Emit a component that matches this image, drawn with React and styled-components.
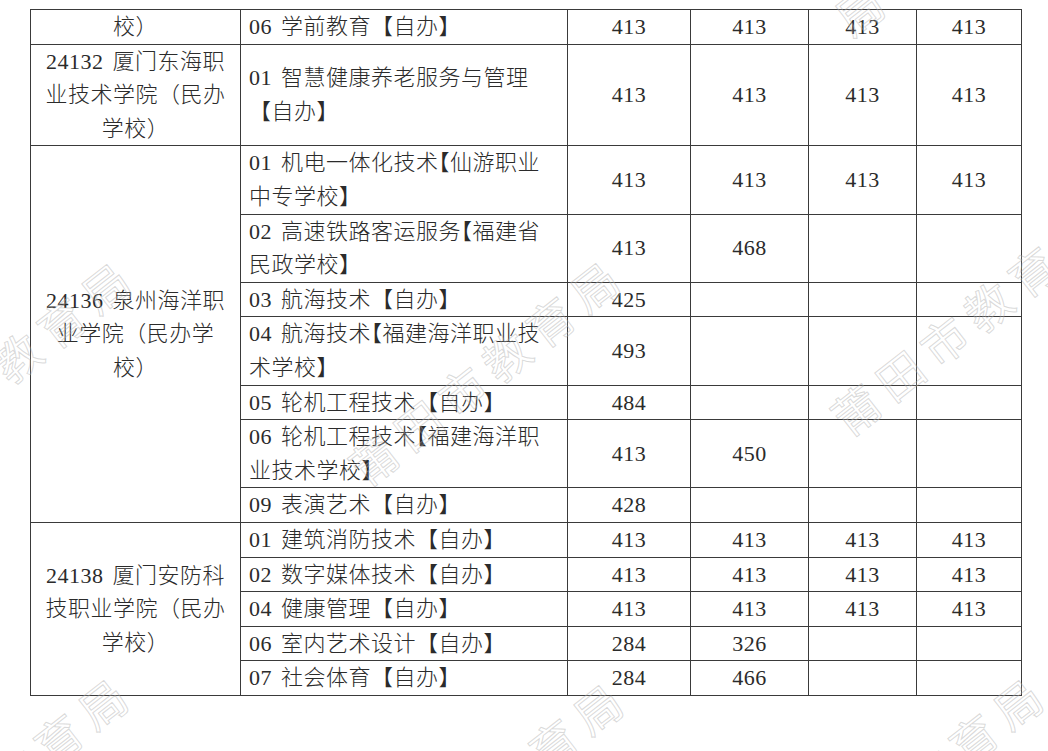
import React from 'react';
import styled, { createGlobalStyle } from 'styled-components';

const GlobalStyle = createGlobalStyle`
  html, body {
    margin: 0;
    padding: 0;
    background: #ffffff;
  }
`

const Page = styled.div`
  position: relative;
  width: 1048px;
  height: 751px;
  overflow: hidden;
  box-sizing: border-box;
  padding: 9px 0 0 30px;
  background: #ffffff;
  font-family: "Liberation Serif", "Noto Sans CJK SC", serif;
  color: #2b2b2b;
`

const Table = styled.table`
  border-collapse: collapse;
  table-layout: fixed;
  width: 991px;
`

const Col = styled.col`
  width: ${p => p.w}px;
`

const Cell = styled.td`
  border: 1px solid #3a3a3a;
  padding: 0;
  font-size: 22px;
  font-weight: 300;
  letter-spacing: 0.5px;
  word-spacing: 3px;
  line-height: 33.6px;
  vertical-align: middle;
  white-space: nowrap;
  overflow: hidden;
`

const SchoolCell = styled(Cell)`
  text-align: center;
`

const MajorCell = styled(Cell)`
  text-align: left;
  padding-left: 8px;
`

const ScoreCell = styled(Cell)`
  text-align: center;
`

const Line = styled.div`
  height: 33.6px;
`

const Tight = styled.span`
  margin-left: -0.5em;
`

const Watermark = styled.span`
  position: absolute;
  left: ${p => p.x}px;
  top: ${p => p.y}px;
  transform: translate(-50%, -50%) rotate(-38deg);
  font-family: "Noto Sans CJK SC", sans-serif;
  font-size: 46px;
  letter-spacing: 10px;
  white-space: nowrap;
  color: rgba(255, 255, 255, 0.15);
  -webkit-text-stroke: 1px rgba(165, 165, 165, 0.42);
  pointer-events: none;
`

const groups = [
  {
    school: ['校）'],
    items: [
      { lines: ['06 学前教育【自办】'], scores: ['413', '413', '413', '413'] },
    ],
  },
  {
    school: ['24132 厦门东海职', '业技术学院（民办', '学校）'],
    items: [
      { lines: ['01 智慧健康养老服务与管理', '【自办】'], scores: ['413', '413', '413', '413'] },
    ],
  },
  {
    school: ['24136 泉州海洋职', '业学院（民办学', '校）'],
    items: [
      { lines: ['01 机电一体化技术^【仙游职业', '中专学校】'], scores: ['413', '413', '413', '413'] },
      { lines: ['02 高速铁路客运服务^【福建省', '民政学校】'], scores: ['413', '468', '', ''] },
      { lines: ['03 航海技术【自办】'], scores: ['425', '', '', ''] },
      { lines: ['04 航海技术^【福建海洋职业技', '术学校】'], scores: ['493', '', '', ''] },
      { lines: ['05 轮机工程技术【自办】'], scores: ['484', '', '', ''] },
      { lines: ['06 轮机工程技术^【福建海洋职', '业技术学校】'], scores: ['413', '450', '', ''] },
      { lines: ['09 表演艺术【自办】'], scores: ['428', '', '', ''] },
    ],
  },
  {
    school: ['24138 厦门安防科', '技职业学院（民办', '学校）'],
    items: [
      { lines: ['01 建筑消防技术【自办】'], scores: ['413', '413', '413', '413'] },
      { lines: ['02 数字媒体技术【自办】'], scores: ['413', '413', '413', '413'] },
      { lines: ['04 健康管理【自办】'], scores: ['413', '413', '413', '413'] },
      { lines: ['06 室内艺术设计【自办】'], scores: ['284', '326', '', ''] },
      { lines: ['07 社会体育【自办】'], scores: ['284', '466', '', ''] },
    ],
  },
]

// watermark centres; the top one only shows its tail above the table
const marks = [
  { x: 862, y: 6, text: '局' },
  { x: -2, y: 370, text: '莆田市教育局' },
  { x: 487, y: 369, text: '莆田市教育局' },
  { x: 969, y: 319, text: '莆田市教育局' },
  { x: -5, y: 786, text: '莆田市教育局' },
  { x: 490, y: 791, text: '莆田市教育局' },
  { x: 910, y: 786, text: '莆田市教育局' },
]

// '^' marks a bracket that Word squeezed into half width
const renderLine = (text) => {
  const parts = text.split('^')
  if (parts.length === 1) return text
  return (
    <>
      {parts[0]}
      <Tight>{parts[1].charAt(0)}</Tight>
      {parts[1].slice(1)}
    </>
  )
}

const App = () => {
  return (
    <Page>
      <GlobalStyle />
      <Table>
        <colgroup>
          <Col w={210} />
          <Col w={327} />
          <Col w={123} />
          <Col w={118} />
          <Col w={108} />
          <Col w={105} />
        </colgroup>
        <tbody>
          {groups.map((g, gi) =>
            g.items.map((item, ii) => (
              <tr key={gi + '-' + ii}>
                {ii === 0 && (
                  <SchoolCell rowSpan={g.items.length}>
                    {g.school.map((s, si) => <Line key={si}>{s}</Line>)}
                  </SchoolCell>
                )}
                <MajorCell>
                  {item.lines.map((l, li) => <Line key={li}>{renderLine(l)}</Line>)}
                </MajorCell>
                {item.scores.map((s, si) => (
                  <ScoreCell key={si}>{s}</ScoreCell>
                ))}
              </tr>
            ))
          )}
        </tbody>
      </Table>
      {marks.map((m, i) => (
        <Watermark key={i} x={m.x} y={m.y}>{m.text}</Watermark>
      ))}
    </Page>
  )
}

export default App;
